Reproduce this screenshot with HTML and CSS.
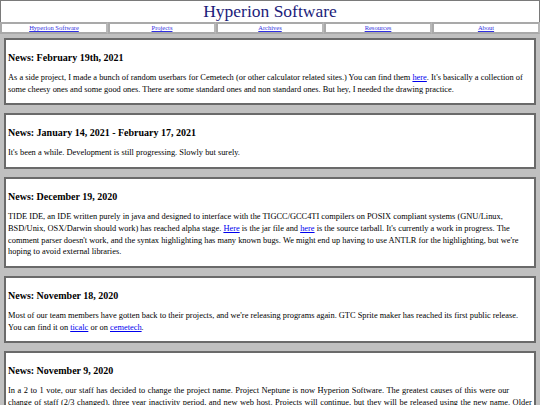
FILE: index.html
```html
<!DOCTYPE html>
<html>
<head>
<meta charset="utf-8">
<link rel="stylesheet" href="styles.css">
</head>
<body>
<div class="header">Hyperion Software</div>
<nav class="nav">
  <div class="navcell"><a href="#">Hyperion Software</a></div>
  <div class="navcell"><a href="#">Projects</a></div>
  <div class="navcell"><a href="#">Archives</a></div>
  <div class="navcell"><a href="#">Resources</a></div>
  <div class="navcell"><a href="#">About</a></div>
</nav>
<main class="content">
  <section class="news">
    <h3>News: February 19th, 2021</h3>
    <p>As a side project, I made a bunch of random userbars for Cemetech (or other calculator related sites.) You can find them <a href="#">here</a>. It's basically a collection of some cheesy ones and some good ones. There are some standard ones and non standard ones. But hey, I needed the drawing practice.</p>
  </section>
  <section class="news">
    <h3>News: January 14, 2021 - February 17, 2021</h3>
    <p>It's been a while. Development is still progressing. Slowly but surely.</p>
  </section>
  <section class="news">
    <h3>News: December 19, 2020</h3>
    <p>TIDE IDE, an IDE written purely in java and designed to interface with the TIGCC/GCC4TI compilers on POSIX compliant systems (GNU/Linux, BSD/Unix, OSX/Darwin should work) has reached alpha stage. <a href="#">Here</a> is the jar file and <a href="#">here</a> is the source tarball. It's currently a work in progress. The comment parser doesn't work, and the syntax highlighting has many known bugs. We might end up having to use ANTLR for the highlighting, but we're hoping to avoid external libraries.</p>
  </section>
  <section class="news">
    <h3>News: November 18, 2020</h3>
    <p>Most of our team members have gotten back to their projects, and we're releasing programs again. GTC Sprite maker has reached its first public release. You can find it on <a href="#">ticalc</a> or on <a href="#">cemetech</a>.</p>
  </section>
  <section class="news">
    <h3>News: November 9, 2020</h3>
    <p class="wide">In a 2 to 1 vote, our staff has decided to change the project name. Project Neptune is now Hyperion Software. The greatest causes of this were our change of staff (2/3 changed), three year inactivity period, and new web host. Projects will continue, but they will be released using the new name. Older projects will keep their original name.</p>
  </section>
</main>
</body>
</html>
```

FILE: styles.css
```css
html, body {
  margin: 0;
  padding: 0;
  background: #c0c0c0;
  font-family: "Liberation Serif", "Times New Roman", serif;
  color: #000;
}
a { color: #0000ee; }
.header {
  background: #fff;
  border: 1px solid #7a7a7a;
  border-bottom: 0;
  text-align: center;
  font-size: 17.5px;
  line-height: 21px;
  height: 21px;
  color: #1c1c7a;
}
.nav {
  display: grid;
  grid-template-columns: repeat(5, 1fr);
}
.navcell {
  background: #fff;
  border: 2px solid #a9a9a9;
  border-right-color: #b8b8b8;
  text-align: center;
  font-size: 6.5px;
  line-height: 8px;
  height: 8px;
}
.navcell a { color: #3030e0; }
.content {
  display: flex;
  flex-direction: column;
  gap: 8px;
  padding: 4px 4px 0 4px;
}
.news {
  background: #fff;
  border: 2px solid #6a6a6a;
  padding: 12px 2px 8px 2px;
}
.news h3 {
  font-size: 10px;
  line-height: 12px;
  margin: 0 0 8px 0;
}
.news p {
  font-size: 8.4px;
  line-height: 11.7px;
  margin: 0;
}
.news p.wide {
  word-spacing: 0.45px;
}
```
